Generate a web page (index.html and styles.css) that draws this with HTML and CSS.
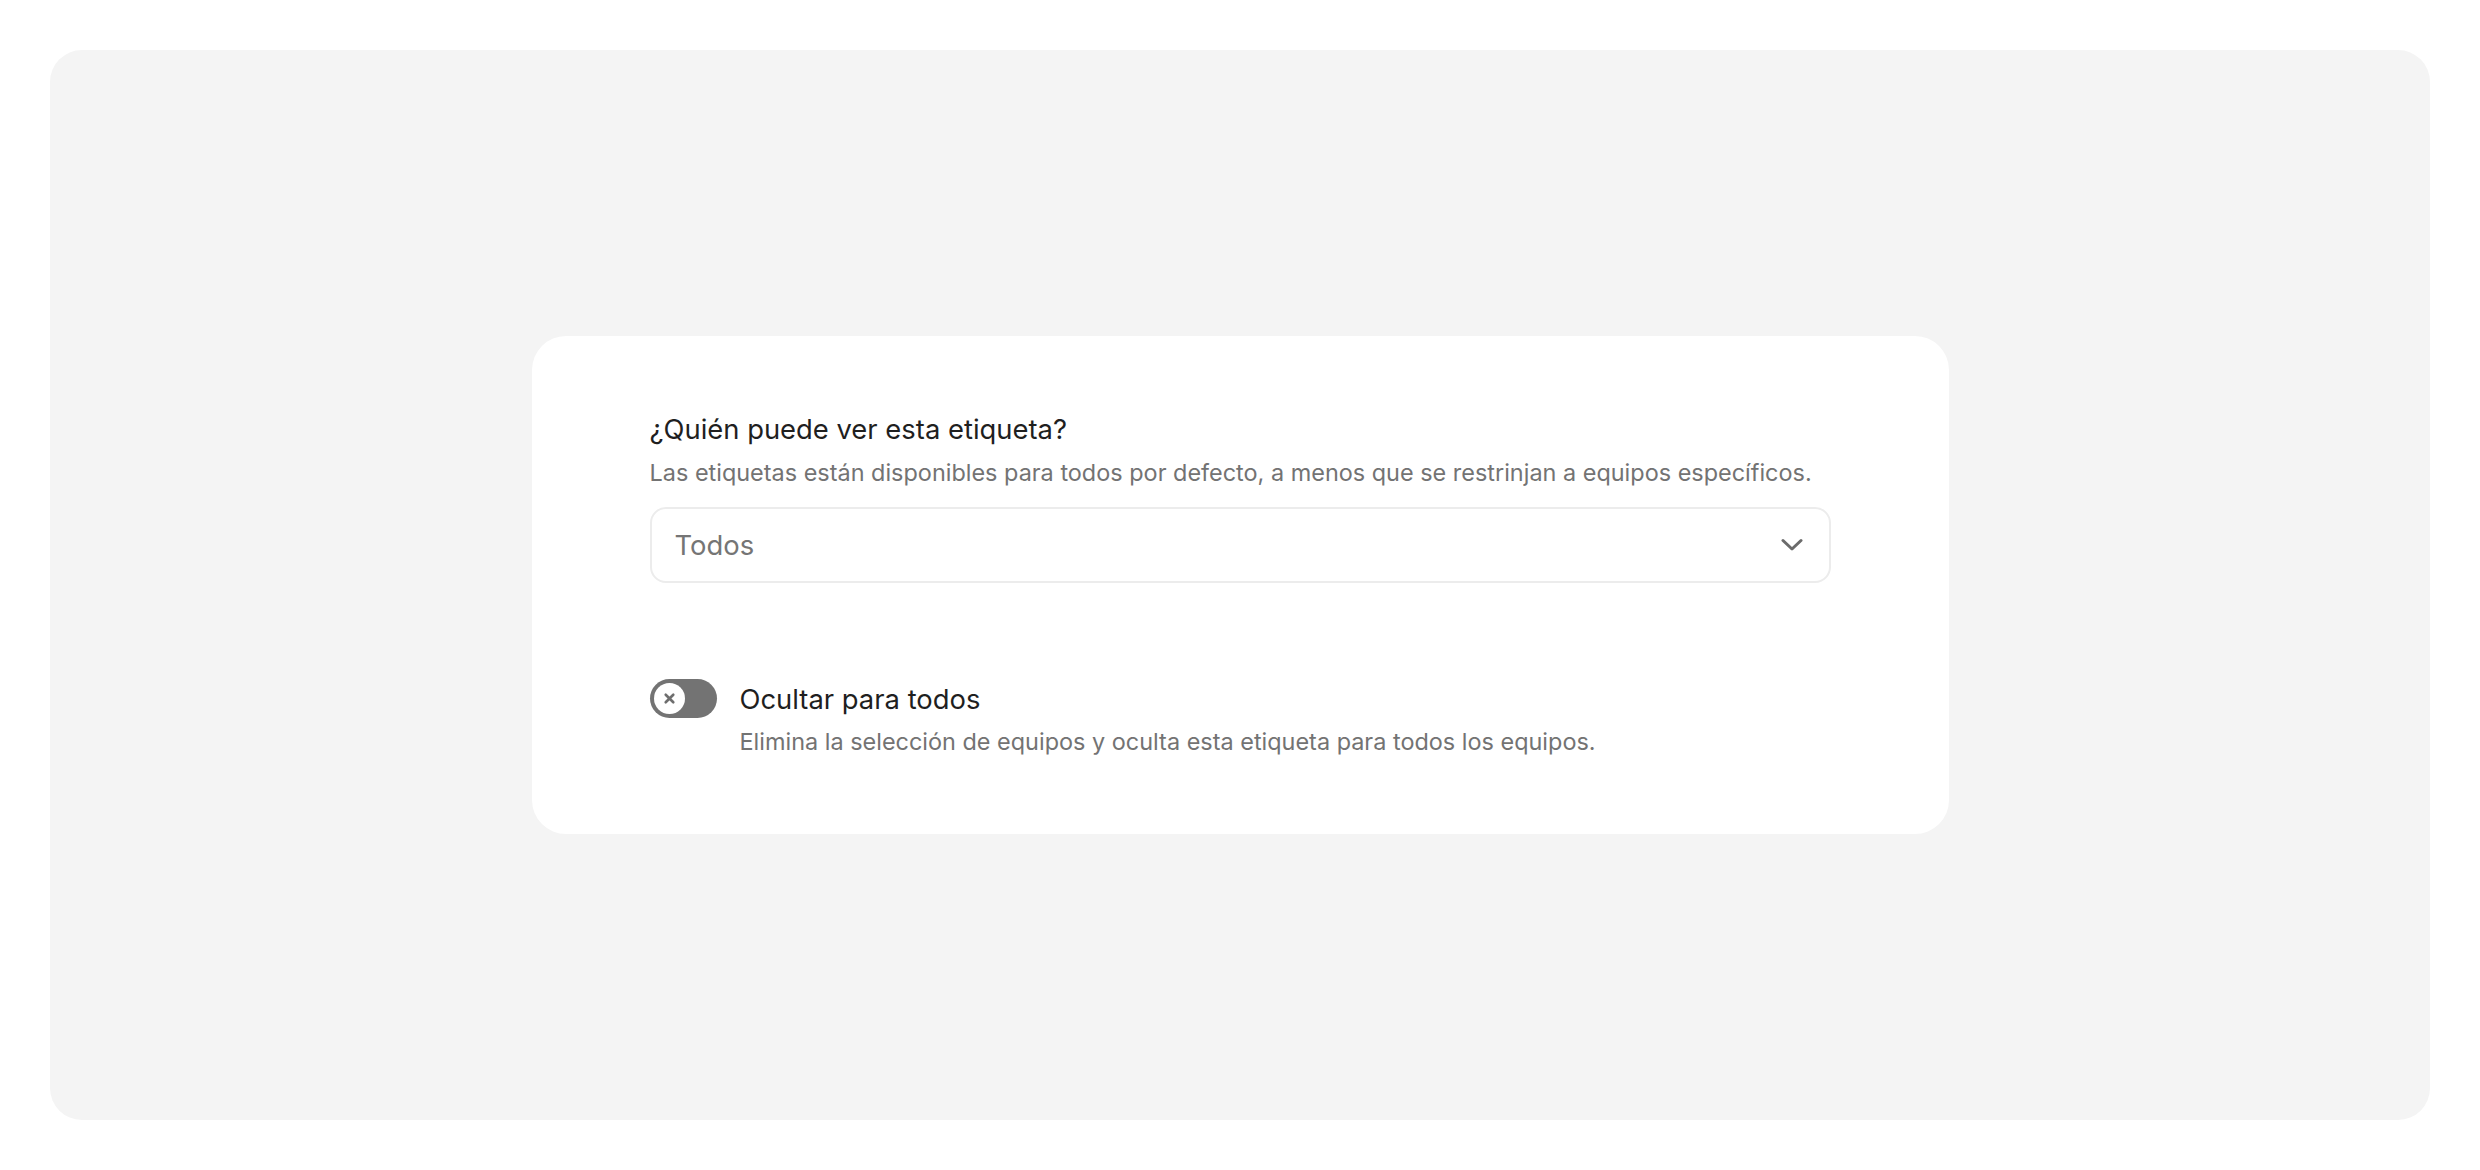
FILE: index.html
```html
<!DOCTYPE html>
<html lang="es">
<head>
<meta charset="utf-8">
<title>Visibilidad de etiqueta</title>
<link rel="stylesheet" href="styles.css">
</head>
<body>
<div class="page">
  <div class="panel">
    <section class="card">
      <div class="field">
        <h2 class="title">¿Quién puede ver esta etiqueta?</h2>
        <p class="desc">Las etiquetas están disponibles para todos por defecto, a menos que se restrinjan a equipos específicos.</p>
        <div class="select">
          <span class="select-value">Todos</span>
          <svg class="chevron" width="22" height="14" viewBox="0 0 22 14" aria-hidden="true">
            <path d="M2 2.5 L11 11 L20 2.5" fill="none" stroke="#6b6b6b" stroke-width="3" stroke-linecap="round" stroke-linejoin="round"/>
          </svg>
        </div>
      </div>
      <div class="toggle-row">
        <div class="toggle">
          <span class="knob">
            <svg width="13" height="13" viewBox="0 0 12 12" aria-hidden="true">
              <path d="M2.5 2.5 L9.5 9.5 M9.5 2.5 L2.5 9.5" stroke="#6e6e6e" stroke-width="2.4" stroke-linecap="round"/>
            </svg>
          </span>
        </div>
        <div class="toggle-text">
          <div class="toggle-title">Ocultar para todos</div>
          <div class="desc">Elimina la selección de equipos y oculta esta etiqueta para todos los equipos.</div>
        </div>
      </div>
    </section>
  </div>
</div>
</body>
</html>
```

FILE: styles.css
```css
html, body {
  margin: 0;
  padding: 0;
  background: #ffffff;
}
body {
  font-family: Inter, "Noto Sans", "Liberation Sans", sans-serif;
  color: #1f1f1f;
}
.page {
  padding: 50px;
  height: 1170px;
  box-sizing: border-box;
}
.panel {
  height: 1070px;
  background: #f4f4f4;
  border-radius: 32px;
  display: flex;
  align-items: center;
  justify-content: center;
}
.card {
  width: 1417px;
  box-sizing: border-box;
  background: #ffffff;
  border-radius: 34px;
  padding: 75px 118px 76px;
  display: flex;
  flex-direction: column;
  gap: 98px;
}
.field {
  display: flex;
  flex-direction: column;
}
.title {
  margin: 0;
  font-size: 27.4px;
  line-height: 36px;
  font-weight: 400;
  color: #1f1f1f;
}
.desc {
  margin: 0;
  font-size: 23.45px;
  line-height: 32px;
  color: #737373;
}
.field .desc {
  margin-top: 10px;
}
.select {
  margin-top: 18px;
  height: 76px;
  box-sizing: border-box;
  border: 2px solid #ececec;
  border-radius: 16px;
  display: flex;
  align-items: center;
  justify-content: space-between;
  padding: 0 26px 0 23px;
}
.select-value {
  font-size: 27.4px;
  color: #757575;
}
.chevron {
  display: block;
}
.toggle-row {
  display: flex;
  align-items: flex-start;
  gap: 23px;
}
.toggle {
  width: 67px;
  height: 39px;
  border-radius: 20px;
  background: #737373;
  box-sizing: border-box;
  padding: 4px;
  flex: none;
  margin-top: -2px;
}
.knob {
  width: 31px;
  height: 31px;
  border-radius: 50%;
  background: #ffffff;
  display: flex;
  align-items: center;
  justify-content: center;
}
.knob svg {
  display: block;
}
.toggle-text {
  display: flex;
  flex-direction: column;
  gap: 9px;
}
.toggle-title {
  font-size: 27.4px;
  line-height: 36px;
  color: #1f1f1f;
}
```
